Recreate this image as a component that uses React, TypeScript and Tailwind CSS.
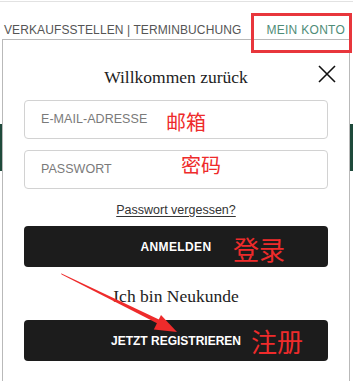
const sans = "font-['Liberation_Sans',Arial,sans-serif]"
const serif = "font-['Liberation_Serif','Times_New_Roman',serif]"
const cjk = "font-['Noto_Sans_CJK_SC',sans-serif]"

function CloseIcon() {
  return (
    <svg width="18" height="18" viewBox="0 0 18 18" fill="none">
      <path d="M1 1L17 17M17 1L1 17" stroke="#111" strokeWidth="1.6" />
    </svg>
  )
}

function Arrow() {
  // red annotation arrow pointing at the register button
  return (
    <svg
      className="absolute left-0 top-0 pointer-events-none"
      width="353"
      height="381"
      viewBox="0 0 353 381"
    >
      <polygon points="61,273.3 61.6,274.6 158.5,324 160,320" fill="#ee2b2b" />
      <polygon points="177,332 153.8,329.5 161,315" fill="#ee2b2b" />
    </svg>
  )
}

function Field({ label }: { label: string }) {
  return (
    <div className="h-[39px] flex items-center rounded-[4px] border border-[#d2d2d2] pl-[16px] text-[12.5px] tracking-[0.05px] text-[#7a7a7a]">
      {label}
    </div>
  )
}

export default function App() {
  return (
    <div className={`relative w-[353px] h-[381px] overflow-hidden bg-white ${sans}`}>
      <div className="mt-px h-px bg-[#e2e2e2]" />

      <nav className="flex items-center whitespace-nowrap pt-[20px] pl-[4px] text-[12px] leading-4 tracking-[0.1px]">
        <span className="shrink-0 text-[#555]">VERKAUFSSTELLEN | TERMINBUCHUNG</span>
        <span className="shrink-0 ml-[25px] text-[#4f8c77] tracking-[0.3px]">MEIN KONTO</span>
      </nav>

      {/* page content behind the dropdown */}
      <div className="mt-[86px] h-[47px] bg-[#1e4a3b]" />

      {/* account dropdown */}
      <div className="absolute left-[2px] top-[39px] w-[348px] h-[360px] border border-[#b9b9b9] bg-white px-[21px] pt-[25px]">
        <button className="absolute right-[13px] top-[25px]">
          <CloseIcon />
        </button>

        <h2 className={`${serif} text-center text-[17.5px] leading-6 text-[#222]`}>
          Willkommen zurück
        </h2>

        <div className="mt-[11px] flex flex-col gap-[11px]">
          <Field label="E-MAIL-ADRESSE" />
          <Field label="PASSWORT" />
        </div>

        <p className="mt-[13px] text-center text-[12.5px] leading-4 text-[#333] underline underline-offset-2">
          Passwort vergessen?
        </p>

        <button className="mt-[8px] w-full h-[41px] rounded-[4px] bg-[#1c1c1c] text-white text-[12px] font-bold tracking-[0.4px]">
          ANMELDEN
        </button>

        <p className={`${serif} mt-[17px] text-center text-[17.5px] leading-6 text-[#222]`}>
          Ich bin Neukunde
        </p>

        <button className="mt-[12px] w-full h-[41px] rounded-[4px] bg-[#1c1c1c] text-white text-[12px] font-bold">
          JETZT REGISTRIEREN
        </button>
      </div>

      {/* red annotations */}
      <div className="absolute left-[251px] top-[13px] w-[101px] h-[40px] border-[3px] border-[#e8363c]" />
      <span className={`${cjk} absolute left-[166px] top-[108px] text-[20px] leading-7 text-[#ee2b2b]`}>邮箱</span>
      <span className={`${cjk} absolute left-[181px] top-[151px] text-[20px] leading-7 text-[#ee2b2b]`}>密码</span>
      <span className={`${cjk} absolute left-[233px] top-[231px] text-[26px] leading-9 text-[#ee2b2b]`}>登录</span>
      <span className={`${cjk} absolute left-[251px] top-[323px] text-[26px] leading-9 text-[#ee2b2b]`}>注册</span>
      <Arrow />
    </div>
  )
}
